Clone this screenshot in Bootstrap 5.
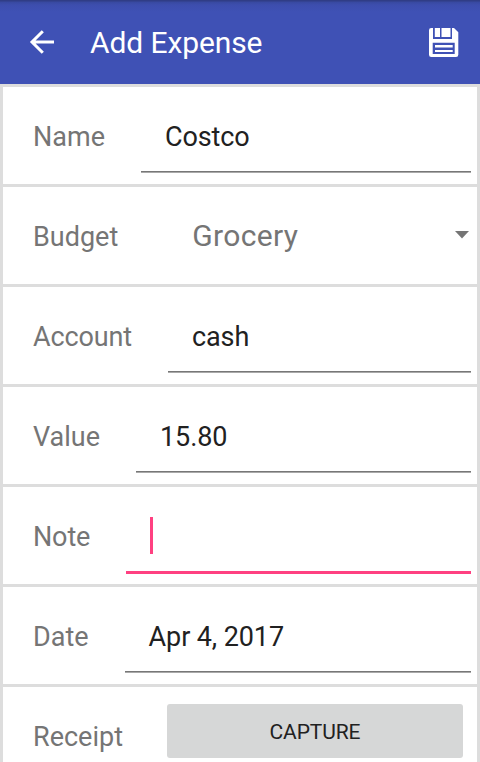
<!DOCTYPE html>
<html lang="en">
<head>
<meta charset="utf-8">
<meta name="viewport" content="width=device-width, initial-scale=1">
<title>Add Expense</title>
<link href="https://cdn.jsdelivr.net/npm/bootstrap@5.3.0/dist/css/bootstrap.min.css" rel="stylesheet">
<style>
body{font-family:Roboto,"Liberation Sans",sans-serif;font-size:27px;line-height:32px;color:#212121;background:#fff;height:762px}
.app-bar{height:84px;flex:none;background:linear-gradient(#303d86 0,#303d86 1px,#3849a0 2px,#3d4eae 5px,#3f51b5 12px);color:#fff;padding:0 21px 0 29px}
.app-title{font-size:30px;line-height:36px;margin-left:35px;padding-top:1px;letter-spacing:-.1px}
.save-icon{margin-top:2px}
.form-list{background:#ddd;padding:3px 3px 0;gap:3px}
.form-line{height:97px;flex:none;background:#fff;padding:0 6px 0 30px}
.caption{color:#757575;margin:34px 36px 0 0;flex:none;white-space:nowrap}
.caption.tight{letter-spacing:-.14px}
.field{height:86px;padding:34px 0 0 24px;border-bottom:1px solid #a9a9a9;box-shadow:inset 0 -1px #777;letter-spacing:-.1px}
.field.active{height:87px;padding-top:30px;border-bottom:3px solid #ff4081;box-shadow:none}
.caret{width:3px;height:37px;background:#ff4081}
.choice{font-size:30px;line-height:36px;letter-spacing:.35px;color:#757575;padding:31px 2px 0 38px;height:97px}
.choice svg{margin-top:13px}
.capture{margin:17px 8px 0 8px;height:54px;border:0;border-radius:3px;background:#d6d7d7;color:#212121;font-size:21px;line-height:24px;letter-spacing:-.1px;padding:1px 0 0}
</style>
<script src="https://cdn.jsdelivr.net/npm/bootstrap@5.3.0/dist/js/bootstrap.bundle.min.js"></script>
</head>
<body class="d-flex flex-column overflow-hidden">
<header class="app-bar d-flex align-items-center">
  <svg width="26" height="26" viewBox="0 0 26 26" fill="none" stroke="#fff" stroke-width="3"><path d="M25 13H3M13.8 2.2 3 13l10.8 10.8"/></svg>
  <h1 class="app-title fw-normal mb-0 flex-grow-1">Add Expense</h1>
  <svg class="save-icon" width="30" height="30" viewBox="0 0 30 30"><path fill="#fff" d="M2.3 0H25l4.3 4.3v22.4a2.3 2.3 0 0 1-2.3 2.3H2.3A2.3 2.3 0 0 1 0 26.7V2.3A2.3 2.3 0 0 1 2.3 0Z"/><path fill="#3f51b5" d="M4 0h1.8v9H11V0h1.5v9h9V0H23v11H4ZM3.7 14.7h22V26h-22Z"/><path fill="#fff" d="M6 17h17.7v2.4H6ZM6 22h17.7v2H6Z"/></svg>
</header>
<main class="form-list d-flex flex-column">
  <div class="form-line d-flex"><div class="caption">Name</div><div class="field flex-grow-1">Costco</div></div>
  <div class="form-line d-flex"><div class="caption">Budget</div><div class="choice flex-grow-1 d-flex justify-content-between"><span>Grocery</span><svg width="14" height="8" viewBox="0 0 14 8"><path fill="#757575" d="M0 0h14L7 7.5Z"/></svg></div></div>
  <div class="form-line d-flex"><div class="caption tight">Account</div><div class="field flex-grow-1">cash</div></div>
  <div class="form-line d-flex"><div class="caption">Value</div><div class="field flex-grow-1">15.80</div></div>
  <div class="form-line d-flex"><div class="caption tight">Note</div><div class="field active flex-grow-1"><div class="caret"></div></div></div>
  <div class="form-line d-flex"><div class="caption">Date</div><div class="field flex-grow-1">Apr 4, 2017</div></div>
  <div class="form-line d-flex"><div class="caption">Receipt</div><button type="button" class="capture btn flex-grow-1">CAPTURE</button></div>
</main>
</body>
</html>
